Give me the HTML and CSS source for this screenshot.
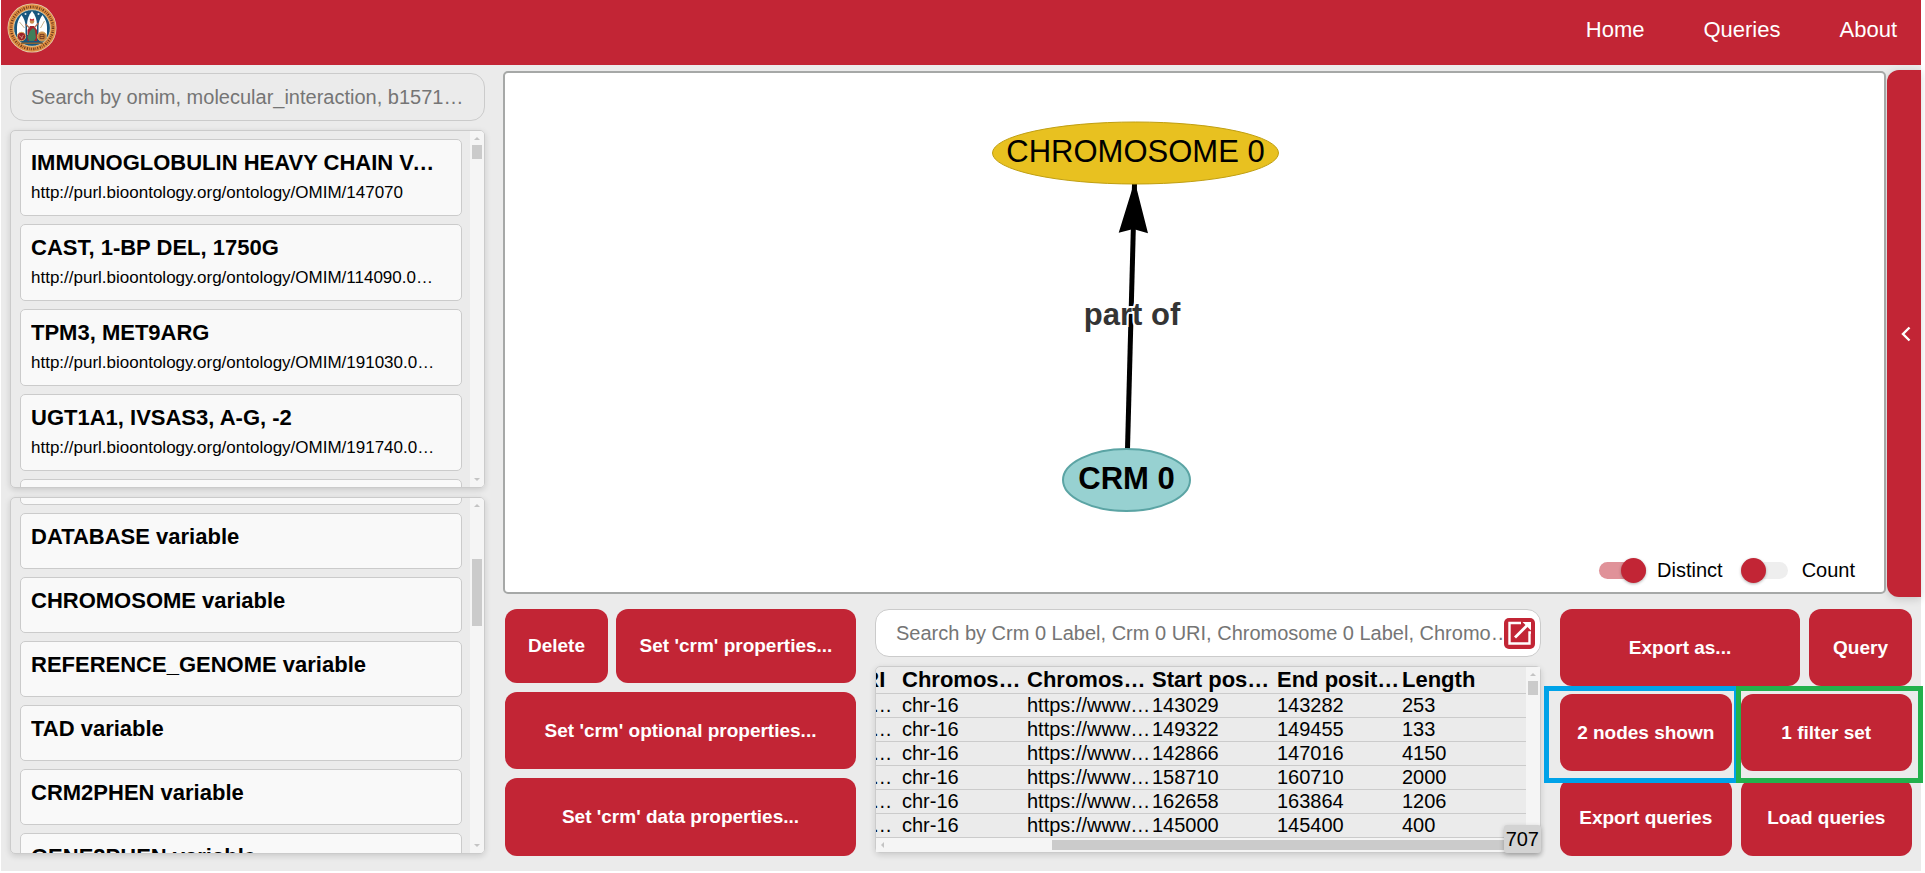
FILE: index.html
```html
<!DOCTYPE html>
<html lang="en">
<head>
<meta charset="utf-8">
<title>Query builder</title>
<link rel="stylesheet" href="styles.css">
</head>
<body>
<div class="app">
  <header class="topbar">
    <a class="logo" href="#" aria-label="Home page">
      <svg viewBox="0 0 50 50" width="50" height="50" aria-hidden="true">
        <circle cx="25" cy="25" r="24.5" fill="#e2d3b4"/>
        <circle cx="25" cy="25" r="21" fill="none" stroke="#e08f42" stroke-width="5.6"/>
        <circle cx="25" cy="25" r="21" fill="none" stroke="#6b3a1e" stroke-width="2.600" stroke-dasharray="1 1.200 .6 1.100 1.200 1.500"/>
        <circle cx="25" cy="25" r="18.300" fill="#17567d" stroke="#e9d9b4" stroke-width=".8"/>
        <path d="M25 8c-3.500 4-5 9-5 14v10h10V22c0-5-1.500-10-5-14z" fill="#fff"/>
        <path d="M14.500 12c-3 4-4.500 8-4.500 12v8h8.500V23c0-4-1.500-8-4-11zM35.500 12c3 4 4.500 8 4.500 12v8h-8.500V23c0-4 1.500-8 4-11z" fill="#fff"/>
        <path d="M12.500 19l5 6M37.500 18l-4 7" stroke="#c7b491" stroke-width="1"/>
        <circle cx="18.500" cy="11" r="1" fill="#dfe7ee"/><circle cx="31.500" cy="11" r="1" fill="#dfe7ee"/>
        <path d="M20.500 27l2.500-4h4l3 4v11h-9.500z" fill="#a3242c"/>
        <path d="M23 28l3-3 2 2 1 8-2 3h-5l-1.500-4z" fill="#3f7f5b"/>
        <path d="M18.500 21l4 4M31.500 20l-4 4.500" stroke="#b06a50" stroke-width="1.200"/>
        <circle cx="25" cy="18.500" r="2.200" fill="#c98a4b"/>
        <path d="M22.800 17.500l.2-2 2 1 2-1 .2 2z" fill="#c22535"/>
        <path d="M14 39.500h22v1.500H14z" fill="#8a6336"/>
        <circle cx="14.500" cy="33.500" r="4.200" fill="#9c2028" stroke="#d8a35c" stroke-width="1"/>
        <path d="M12 32.500l2.500 2 2-2.500M14 35.500l2-1" stroke="#e4b7a0" stroke-width=".7" fill="none"/>
        <circle cx="35" cy="33.500" r="4.600" fill="#c9853d" stroke="#d8a35c" stroke-width="1"/>
        <path d="M33 31.500h4v4h-4zM33 33.500h4" stroke="#6d3420" stroke-width=".8" fill="none"/>
      </svg>
    </a>
    <nav class="nav">
      <a href="#">Home</a>
      <a href="#">Queries</a>
      <a href="#">About</a>
    </nav>
  </header>

  <main class="main">
    <aside class="sidebar">
      <input class="search" type="text" aria-label="Search entities" placeholder="Search by omim, molecular_interaction, b1571_gene, crm, tad">
      <section class="panel" aria-label="Entities">
        <div class="viewport">
          <div class="cards">
            <article class="card"><h2>IMMUNOGLOBULIN HEAVY CHAIN VARIABLE REGION</h2><p>http://purl.bioontology.org/ontology/OMIM/147070</p></article>
            <article class="card"><h2>CAST, 1-BP DEL, 1750G</h2><p>http://purl.bioontology.org/ontology/OMIM/114090.0…</p></article>
            <article class="card"><h2>TPM3, MET9ARG</h2><p>http://purl.bioontology.org/ontology/OMIM/191030.0…</p></article>
            <article class="card"><h2>UGT1A1, IVSAS3, A-G, -2</h2><p>http://purl.bioontology.org/ontology/OMIM/191740.0…</p></article>
            <article class="card"></article>
          </div>
        </div>
        <div class="vbar"><i class="up"></i><b class="thumb short"></b><i class="down"></i></div>
      </section>
      <section class="panel" aria-label="Variables">
        <div class="viewport" data-top="57">
          <div class="cards variables">
            <article class="card"></article>
            <article class="card"><h2>DATABASE variable</h2></article>
            <article class="card"><h2>CHROMOSOME variable</h2></article>
            <article class="card"><h2>REFERENCE_GENOME variable</h2></article>
            <article class="card"><h2>TAD variable</h2></article>
            <article class="card"><h2>CRM2PHEN variable</h2></article>
            <article class="card"><h2>GENE2PHEN variable</h2></article>
          </div>
        </div>
        <div class="vbar"><i class="up"></i><b class="thumb long"></b><i class="down"></i></div>
      </section>
    </aside>

    <section class="workspace">
      <div class="stage">
        <div class="canvas">
          <svg class="graph" viewBox="0 0 1379 519" role="img" aria-label="CRM 0 part of CHROMOSOME 0">
            <path d="M622.500 376L629.500 111" stroke="#000" stroke-width="5"/>
            <path d="M629.700 108L643 160.300 628.300 156 613.700 159.700z"/>
            <ellipse cx="630.500" cy="80" rx="143" ry="31" fill="#e8c120" stroke="#c09f12"/>
            <ellipse cx="621.500" cy="407" rx="63.500" ry="31" fill="#97d1d1" stroke="#5ba4a4" stroke-width="2"/>
            <text x="630.500" y="89">CHROMOSOME 0</text>
            <text class="strong" x="621.500" y="416">CRM 0</text>
            <text class="edge" x="627" y="252">part of</text>
          </svg>
          <div class="toggles">
            <input class="switch" type="checkbox" id="distinct" checked><label for="distinct">Distinct</label>
            <input class="switch" type="checkbox" id="count"><label for="count">Count</label>
          </div>
        </div>
        <button class="drawer" type="button" aria-label="Open side panel">
          <svg viewBox="0 0 10 16" width="10" height="16" aria-hidden="true"><path d="M8.500 1.500L2 8l6.500 6.500" fill="none" stroke="#fff" stroke-width="2.400"/></svg>
        </button>
      </div>

      <div class="bottom">
        <div class="actions">
          <div class="row narrow-first">
            <button class="btn" type="button">Delete</button>
            <button class="btn" type="button">Set 'crm' properties...</button>
          </div>
          <button class="btn" type="button">Set 'crm' optional properties...</button>
          <button class="btn" type="button">Set 'crm' data properties...</button>
        </div>

        <div class="results">
          <div class="searchbox">
            <input class="search light" type="text" aria-label="Search results" placeholder="Search by Crm 0 Label, Crm 0 URI, Chromosome 0 Label, Chromosome 0 URI, Start position">
            <button class="open" type="button" aria-label="Open results">
              <svg viewBox="0 0 31 31" width="31" height="31" aria-hidden="true"><path d="M17 5H5.500v20.500H25.500V14.500h1.500" fill="none" stroke="#fff" stroke-width="2.400"/><path d="M11 19.500L23 7.500" stroke="#fff" stroke-width="2.800"/><path d="M18.500 4H27v8.500z" fill="#fff"/></svg>
            </button>
          </div>
          <div class="panel table-panel">
            <div class="table-area">
              <div class="viewport" data-left="99">
                <table>
                  <thead><tr><th>Crm 0 URI</th><th>Chromosome 0 Label</th><th>Chromosome 0 URI</th><th>Start position</th><th>End position</th><th>Length</th></tr></thead>
                  <tbody>
                    <tr><td>http://www…</td><td>chr-16</td><td>https://www…</td><td>143029</td><td>143282</td><td>253</td></tr>
                    <tr><td>http://www…</td><td>chr-16</td><td>https://www…</td><td>149322</td><td>149455</td><td>133</td></tr>
                    <tr><td>http://www…</td><td>chr-16</td><td>https://www…</td><td>142866</td><td>147016</td><td>4150</td></tr>
                    <tr><td>http://www…</td><td>chr-16</td><td>https://www…</td><td>158710</td><td>160710</td><td>2000</td></tr>
                    <tr><td>http://www…</td><td>chr-16</td><td>https://www…</td><td>162658</td><td>163864</td><td>1206</td></tr>
                    <tr><td>http://www…</td><td>chr-16</td><td>https://www…</td><td>145000</td><td>145400</td><td>400</td></tr>
                  </tbody>
                </table>
              </div>
              <div class="vbar"><i class="up"></i><b class="thumb short"></b></div>
            </div>
            <div class="hbar"><i class="left"></i><b class="hthumb"></b></div>
            <output class="total">707</output>
          </div>
        </div>

        <div class="actions right">
          <div class="row narrow-last">
            <button class="btn" type="button">Export as...</button>
            <button class="btn" type="button">Query</button>
          </div>
          <div class="row">
            <div class="marked blue"><button class="btn" type="button">2 nodes shown</button></div>
            <div class="marked green"><button class="btn" type="button">1 filter set</button></div>
          </div>
          <div class="row">
            <button class="btn" type="button">Export queries</button>
            <button class="btn" type="button">Load queries</button>
          </div>
        </div>
      </div>
    </section>
  </main>
</div>
<script src="app.js"></script>
</body>
</html>
```

FILE: styles.css
```css
:root {
  --red: #c22535;
  --line: #cbcbcb;
  --bg: #ebebeb;
}

* { box-sizing: border-box; }

body {
  margin: 0;
  background: #fff;
  color: #000;
  font-family: "Liberation Sans", Arial, sans-serif;
  font-size: 20px;
}

button, input { font-family: inherit; }

.app {
  display: flex;
  flex-direction: column;
  height: calc(100vh - 2px);
  margin: 0 4px 2px 1px;
  background: var(--bg);
}

/* Top bar */
.topbar {
  display: flex;
  justify-content: space-between;
  align-items: flex-start;
  height: 65px;
  padding: 3px 24px 0 6px;
  background: var(--red);
}
.logo { display: block; height: 50px; }
.nav { display: flex; gap: 59px; padding-top: 14px; }
.nav a {
  color: #fff;
  font-size: 22px;
  line-height: 26px;
  text-decoration: none;
}

/* Page columns */
.main {
  flex: 1;
  min-height: 0;
  display: grid;
  grid-template-columns: minmax(0, 475fr) minmax(0, 1418fr);
  gap: 18px;
  padding-left: 9px;
}
.sidebar {
  display: flex;
  flex-direction: column;
  gap: 9px;
  min-height: 0;
  padding: 8px 0 17px;
}

.search {
  width: 100%;
  height: 48px;
  padding: 0 20px;
  border: 1px solid var(--line);
  border-radius: 14px;
  background: transparent;
  color: #000;
  font-size: 20px;
  text-overflow: ellipsis;
}
.search::placeholder { color: #757575; opacity: 1; }
.search.light { background: #fff; }

.panel {
  flex: 1;
  display: flex;
  min-height: 0;
  overflow: hidden;
  border: 1px solid var(--line);
  border-radius: 5px;
  box-shadow: 0 2px 6px rgba(0, 0, 0, .14);
}
.viewport { flex: 1; min-width: 0; overflow: hidden; }
.cards {
  display: flex;
  flex-direction: column;
  gap: 8px;
  padding: 8px 8px 8px 9px;
}
.card {
  flex: none;
  height: 77px;
  padding: 9px 16px 0 10px;
  border: 1px solid var(--line);
  border-radius: 5px;
  background: #f9f9f9;
}
.variables .card { height: 56px; }
.card h2, .card p {
  margin: 0;
  overflow: hidden;
  white-space: nowrap;
  text-overflow: ellipsis;
}
.card h2 { font-size: 22px; line-height: 28px; }
.card p { font-size: 17px; line-height: 32px; }

/* Scroll bars */
.vbar {
  flex: none;
  display: flex;
  flex-direction: column;
  align-items: center;
  width: 14px;
  padding: 6px 0;
  background: #f5f5f5;
}
.vbar i { border: 3px solid transparent; }
.vbar .up { border-top: 0; border-bottom-color: #c4c4c4; }
.vbar .down { margin-top: auto; border-bottom: 0; border-top-color: #c4c4c4; }
.thumb { width: 10px; background: #cbcbcb; }
.thumb.short { height: 14px; margin-top: 5px; }
.thumb.long { height: 67px; margin-top: 52px; }

/* Graph */
.workspace {
  display: flex;
  flex-direction: column;
  gap: 12px;
  min-width: 0;
  padding: 5px 0 15px;
}
.stage {
  flex: 1;
  min-height: 0;
  display: flex;
  gap: 1px;
}
.canvas {
  position: relative;
  flex: 1;
  min-width: 0;
  margin: 1px 0 3px;
  border: 2px solid #a6a8a7;
  border-radius: 5px;
  background: #fff;
}
.graph { display: block; width: 100%; height: 100%; }
.graph text { font-size: 31px; text-anchor: middle; }
.graph .strong, .graph .edge { font-weight: bold; }
.graph .edge {
  fill: #343434;
  stroke: #fff;
  stroke-width: 4px;
  paint-order: stroke;
}
.toggles {
  position: absolute;
  right: 29px;
  bottom: 9px;
  display: flex;
  align-items: center;
  line-height: 25px;
}
.toggles label { margin: 0 18px 0 11px; }
.toggles label:last-child { margin: 0 0 0 14px; }
.switch {
  position: relative;
  appearance: none;
  display: flex;
  align-items: center;
  width: 47px;
  height: 25px;
  margin: 0;
}
.switch::before {
  content: "";
  position: absolute;
  inset: 4px 0;
  border-radius: 9px;
  background: #eee;
}
.switch::after {
  content: "";
  position: relative;
  width: 25px;
  height: 25px;
  border-radius: 50%;
  background: var(--red);
  box-shadow: 0 1px 3px rgba(0, 0, 0, .3);
}
.switch:checked { justify-content: flex-end; }
.switch:checked::before { background: #e09299; }

.drawer {
  display: flex;
  align-items: center;
  justify-content: flex-end;
  width: 34px;
  padding: 0 10px 0 0;
  border: 0;
  border-radius: 12px 0 0 12px;
  background: var(--red);
  box-shadow: 0 2px 8px rgba(0, 0, 0, .16);
}

/* Bottom area */
.bottom {
  display: grid;
  grid-template-columns: minmax(0, 351fr) minmax(0, 666fr) minmax(0, 352fr);
  gap: 19px;
  height: 247px;
  padding: 0 9px 0 2px;
}
.actions {
  display: grid;
  grid-template-rows: 74fr 77fr 78fr;
  gap: 9px;
}
.actions.right { grid-template-rows: 77fr 77fr 77fr; gap: 8px; }
.row {
  display: grid;
  grid-template-columns: 1fr 1fr;
  gap: 9px;
}
.row.narrow-first { grid-template-columns: 103fr 240fr; gap: 8px; }
.row.narrow-last { grid-template-columns: 240fr 103fr; }
.btn {
  width: 100%;
  height: 100%;
  padding: 0;
  border: 0;
  border-radius: 12px;
  background: var(--red);
  color: #fff;
  font-size: 19px;
  font-weight: bold;
}

/* Highlight frames drawn around buttons */
.marked { position: relative; }
.marked::after {
  content: "";
  position: absolute;
  z-index: 1;
  border: 5px solid #00a2e8;
  pointer-events: none;
}
.marked.blue::after { inset: -8px -7px -12px -16px; }
.marked.green::after { inset: -8px -11px -12px -5px; border-color: #22b14c; }

/* Results */
.results {
  display: flex;
  flex-direction: column;
  gap: 9px;
  min-width: 0;
  padding-bottom: 3px;
}
.searchbox { position: relative; display: flex; }
.open {
  position: absolute;
  top: 9px;
  right: 6px;
  width: 31px;
  height: 31px;
  padding: 0;
  border: 0;
  border-radius: 5px;
  background: var(--red);
}
.open svg { display: block; }
.table-panel { position: relative; flex-direction: column; overflow: visible; }
.table-area { flex: 1; display: flex; min-height: 0; }
table {
  width: 750px;
  border-collapse: collapse;
  table-layout: fixed;
}
tr { border-bottom: 1px solid var(--line); }
th, td {
  padding: 0;
  overflow: hidden;
  text-align: left;
  text-overflow: ellipsis;
  white-space: nowrap;
}
th { padding-right: 2px; font-size: 22px; line-height: 26px; }
td { font-size: 20px; line-height: 23px; }
th:first-child, td:first-child { padding-left: 2px; }
.hbar {
  flex: none;
  display: flex;
  align-items: center;
  height: 14px;
  padding-left: 5px;
  background: #f5f5f5;
}
.hbar .left { border: 3px solid transparent; border-left: 0; border-right-color: #c4c4c4; }
.hthumb { width: 72%; height: 10px; margin-left: auto; margin-right: 14px; background: #cbcbcb; }
.total {
  position: absolute;
  right: -1px;
  bottom: -1px;
  padding: 0 2px;
  border-radius: 3px;
  background: #d3d3d3;
  box-shadow: 0 2px 5px rgba(0, 0, 0, .25);
  line-height: 28px;
}
```

FILE: app.js
```js
document.querySelectorAll(".viewport").forEach((el) => {
  el.scrollTop = Number(el.dataset.top || 0);
  el.scrollLeft = Number(el.dataset.left || 0);
});
```
